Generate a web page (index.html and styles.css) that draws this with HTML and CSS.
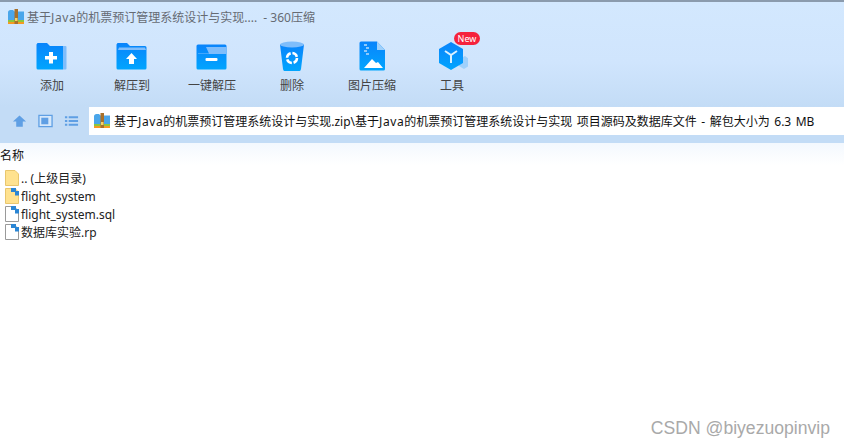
FILE: index.html
```html
<!DOCTYPE html>
<html lang="zh-CN">
<head>
  <meta charset="UTF-8">
  <title>360压缩</title>
  <link rel="stylesheet" href="styles.css">
</head>
<body>
  <svg class="defs" width="0" height="0">
    <defs>
      <linearGradient id="blue" x1="0" y1="0" x2="0" y2="1">
        <stop offset="0" stop-color="#0a84fb"/>
        <stop offset="1" stop-color="#01a5fe"/>
      </linearGradient>
      <symbol id="zip" viewBox="0 0 16 16">
        <path d="M0 3.500C0 2 1 1 2.500 1H5l1.500 1.500H16V12H0z" fill="#4aa6ea"/>
        <rect x="0" y="11" width="16" height="2" fill="#8cc63f"/>
        <rect x="0" y="13" width="16" height="2" fill="#f59a23"/>
        <rect x="6.500" y="0" width="3.500" height="15" fill="#a8702a"/>
        <rect x="7" y="9" width="2.500" height="3" fill="#f6d365"/>
      </symbol>
      <symbol id="doc" viewBox="0 0 14 16">
        <path d="M.5.500H9L13.500 5V15.500H.5z" fill="#fff" stroke="#9a9a9a"/>
      </symbol>
      <symbol id="dir" viewBox="0 0 14 16">
        <path d="M.5.500H10L13.500 4V15.500H.5z" fill="#ffe28f" stroke="#e9c66d"/>
      </symbol>
      <symbol id="link" viewBox="0 0 14 16">
        <path d="M6 0h5v3h3v4.500h-4V4H6z" fill="#2b86d4"/>
      </symbol>
    </defs>
  </svg>

  <div class="window">
    <div class="chrome">
      <div class="titlebar">
        <svg class="zip-small"><use href="#zip"/></svg>
        <span>基于<span class="latin">Java</span>的机票预订管理系统设计与实现.... &nbsp;- 360压缩</span>
      </div>

      <div class="toolbar">
        <div class="tool">
          <svg class="tool-icon" viewBox="0 0 32 28">
            <path d="M2 26.500a1.500 1.500 0 0 1-1.500-1.500V1.500L1.500 0H11l3 3h13v23.500z" fill="url(#blue)"/>
            <path d="M27 3h2.500a1 1 0 0 1 1 1v21.500a1 1 0 0 1-1 1H27z" fill="#7fbdfb"/>
            <path d="M13 9h4v4h4v3.500h-4v4h-4v-4H9V13h4z" fill="#fff"/>
          </svg>
          <span>添加</span>
        </div>
        <div class="tool">
          <svg class="tool-icon" viewBox="0 0 32 28">
            <path d="M2 26.500A1.500 1.500 0 0 1 .5 25V1.500L1.500 0H11l3 3h15a1.500 1.500 0 0 1 1.500 1.500V25a1.500 1.500 0 0 1-1.500 1.500z" fill="url(#blue)"/>
            <path d="M2 7l1-2.500h26L30 7z" fill="#7fbdfb"/>
            <path d="M15.500 10l5.500 6h-3v5h-5v-5h-3z" fill="#fff"/>
          </svg>
          <span>解压到</span>
        </div>
        <div class="tool">
          <svg class="tool-icon" viewBox="0 0 32 28">
            <path d="M2 26.500A1.500 1.500 0 0 1 .5 25V3A1.500 1.500 0 0 1 2 1.500h27A1.500 1.500 0 0 1 30.500 3v22a1.500 1.500 0 0 1-1.500 1.500z" fill="url(#blue)"/>
            <path d="M10 4h20.500v7H2v-.5h11z" fill="#7fbdfb"/>
            <rect x="9.500" y="15" width="12" height="3" rx="1" fill="#fff"/>
          </svg>
          <span>一键解压</span>
        </div>
        <div class="tool">
          <svg class="tool-icon" viewBox="0 0 32 32">
            <path d="M4 3.500 7 28a1.500 3 0 0 0 1.500 2h15a1.500 3 0 0 0 1.500-2L28 3.500z" fill="url(#blue)"/>
            <ellipse cx="16" cy="3.500" rx="12" ry="3" fill="#7fbdfb"/>
            <circle cx="16" cy="17" r="5" fill="none" stroke="#fff" stroke-width="2.500" stroke-dasharray="6 1.800"/>
          </svg>
          <span>删除</span>
        </div>
        <div class="tool">
          <svg class="tool-icon" viewBox="0 0 32 32">
            <path d="M5 .5H21L29 9V28A1.500 1.500 0 0 1 27.500 29.500H5A1.500 1.500 0 0 1 3.500 28V2A1.500 1.500 0 0 1 5 .5z" fill="url(#blue)"/>
            <path d="M21 .5 29 9H21z" fill="#9fd0fb"/>
            <path d="M8 3h3v2H8zm2 3h3v2h-3zM8 9h3v2H8zm2 3h3v2h-3z" fill="#8cc8fb"/>
            <path d="M8 27l8-9 4 4 2-1 5 6z" fill="#fff"/>
          </svg>
          <span>图片压缩</span>
        </div>
        <div class="tool">
          <svg class="tool-icon" viewBox="0 0 32 32">
            <path d="M29 15l4 3v7l-5 3-5-3v-7z" fill="#9fd0fb"/>
            <path d="M15 1 27 8V22L15 29 3 22V8z" fill="url(#blue)"/>
            <path d="M9 10l6 4 6-4M15 14v8" fill="none" stroke="#d8f0ff" stroke-width="2"/>
          </svg>
          <span>工具</span>
          <b class="badge">New</b>
        </div>
      </div>

      <div class="navbar">
        <div class="nav-icons">
          <svg class="nav-icon" viewBox="0 0 16 14"><path d="M8 1l7 6.500h-3.500V13h-7V7.500H1z" fill="#5f9fe4"/></svg>
          <svg class="nav-icon" viewBox="0 0 16 14"><path d="M1 1h14v12H1z" fill="#d6e8fb" stroke="#5f9fe4" stroke-width="1.400"/><rect x="3.500" y="3.500" width="7.500" height="7" fill="#5f9fe4"/></svg>
          <svg class="nav-icon" viewBox="0 0 16 14"><path d="M1 2h2.500v2H1zm4 0h10v2H5zM1 6h2.500v2H1zm4 0h10v2H5zM1 10h2.500v2H1zm4 0h10v2H5z" fill="#5f9fe4"/></svg>
        </div>
        <div class="address">
          <svg class="zip-address"><use href="#zip"/></svg>
          <span>基于<span class="latin">Java</span>的机票预订管理系统设计与实现.zip\基于<span class="latin">Java</span>的机票预订管理系统设计与实现 项目源码及数据库文件 - 解包大小为 6.3 MB</span>
        </div>
      </div>
    </div>

    <div class="list-head">名称</div>
    <ul class="files">
      <li><svg class="file-icon"><use href="#dir"/></svg>.. (上级目录)</li>
      <li><svg class="file-icon"><use href="#dir"/><use href="#link"/></svg>flight_system</li>
      <li><svg class="file-icon"><use href="#doc"/><use href="#link"/></svg>flight_system.sql</li>
      <li><svg class="file-icon"><use href="#doc"/><use href="#link"/></svg>数据库实验.rp</li>
    </ul>
  </div>

  <div class="watermark">CSDN @biyezuopinvip</div>
</body>
</html>
```

FILE: styles.css
```css
* {
  margin: 0;
  padding: 0;
  box-sizing: border-box;
}
html, body {
  height: 100%;
  overflow: hidden;
}
body {
  position: relative;
  background: #fff;
  font-size: 12px;
  font-family: "Noto Sans", "Noto Sans CJK SC", sans-serif;
  color: #1a1a1a;
}
.defs {
  position: absolute;
}
.latin {
  letter-spacing: .6px;
}
.chrome {
  height: 143px;
  border-top: 2px solid #8b9bad;
  background: linear-gradient(#d3e8fe 0, #d0e5fd 60px, #c3dcf6 105px, #c3dcf6 143px);
}
.titlebar {
  display: flex;
  align-items: center;
  gap: 3px;
  height: 30px;
  padding-left: 8px;
  color: #666b73;
}
.zip-small {
  width: 16px;
  height: 16px;
}
.toolbar {
  display: flex;
  height: 75px;
  padding-left: 12px;
}
.tool {
  position: relative;
  display: flex;
  flex-direction: column;
  align-items: center;
  width: 80px;
  padding-top: 9px;
  color: #444;
}
.tool-icon {
  width: 32px;
  height: 32px;
  margin-bottom: 3px;
}
.badge {
  position: absolute;
  top: 0;
  left: 42px;
  width: 26px;
  border-radius: 7px;
  background: #f5223c;
  color: #fff;
  font-size: 9px;
  font-weight: 400;
  line-height: 13px;
  text-align: center;
}
.navbar {
  display: flex;
  height: 28px;
}
.nav-icons {
  display: flex;
  align-items: center;
  gap: 11px;
  width: 89px;
  padding-left: 12px;
}
.nav-icon {
  width: 15px;
  height: 14px;
}
.address {
  display: flex;
  flex: 1;
  align-items: center;
  gap: 4px;
  padding-left: 5px;
  background: #fff;
  color: #111;
  white-space: nowrap;
  word-spacing: 1.4px;
}
.zip-address {
  width: 16px;
  height: 16px;
}
.list-head {
  height: 22px;
  padding-top: 4px;
  background: linear-gradient(#f3f8fe, #fff);
  color: #111;
  line-height: 17px;
}
.files {
  list-style: none;
  padding: 4px 0 0 5px;
}
.files li {
  display: flex;
  align-items: center;
  gap: 2px;
  height: 18px;
  color: #222;
}
.file-icon {
  width: 14px;
  height: 16px;
}
.watermark {
  position: absolute;
  right: 14px;
  bottom: 9px;
  color: #a9a9a9;
  font-size: 17.6px;
  font-family: "Liberation Sans", sans-serif;
}
```
